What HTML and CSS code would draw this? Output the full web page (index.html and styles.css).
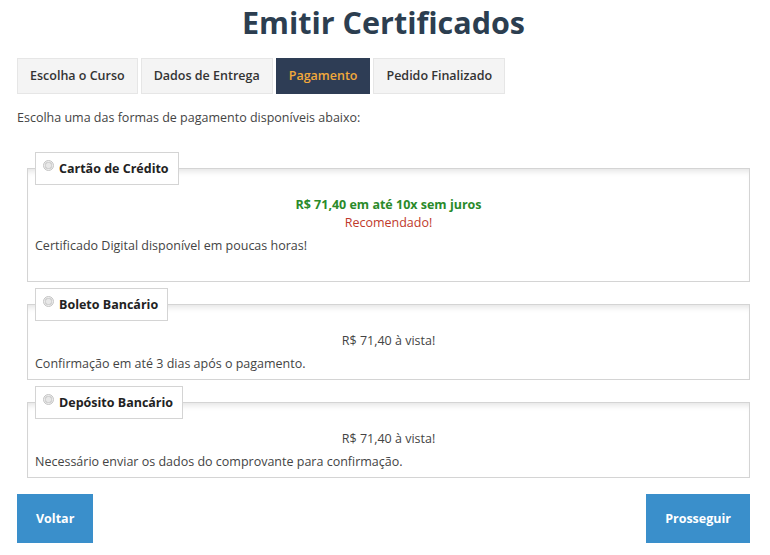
FILE: index.html
```html
<!DOCTYPE html>
<html lang="pt-BR">
<head>
  <meta charset="UTF-8">
  <title>Emitir Certificados</title>
  <link rel="stylesheet" href="styles.css">
</head>
<body>
  <h1>Emitir Certificados</h1>

  <ul class="etapas">
    <li>Escolha o Curso</li>
    <li>Dados de Entrega</li>
    <li class="ativa">Pagamento</li>
    <li>Pedido Finalizado</li>
  </ul>

  <p class="intro">Escolha uma das formas de pagamento disponíveis abaixo:</p>

  <form class="pagamentos">
    <fieldset class="forma">
      <legend><label><input type="radio" name="forma" value="cartao"> Cartão de Crédito</label></legend>
      <p class="preco destaque">R$ 71,40 em até 10x sem juros</p>
      <p class="preco recomendado">Recomendado!</p>
      <p class="obs extra">Certificado Digital disponível em poucas horas!</p>
    </fieldset>

    <fieldset class="forma">
      <legend><label><input type="radio" name="forma" value="boleto"> Boleto Bancário</label></legend>
      <p class="preco">R$ 71,40 à vista!</p>
      <p class="obs">Confirmação em até 3 dias após o pagamento.</p>
    </fieldset>

    <fieldset class="forma">
      <legend><label><input type="radio" name="forma" value="deposito"> Depósito Bancário</label></legend>
      <p class="preco">R$ 71,40 à vista!</p>
      <p class="obs">Necessário enviar os dados do comprovante para confirmação.</p>
    </fieldset>

    <div class="botoes">
      <button type="button" class="btn">Voltar</button>
      <button type="button" class="btn">Prosseguir</button>
    </div>
  </form>
</body>
</html>
```

FILE: styles.css
```css
body {
  font-family: "Open Sans", "Liberation Sans", sans-serif;
  font-size: 12.5px;
  color: #444;
  background: #fff;
  margin: 0;
  padding: 2px 20px 0 17px;
}
h1 {
  margin: 0;
  text-align: center;
  font-size: 30.5px;
  line-height: 40px;
  font-weight: 700;
  color: #2c3e50;
}
.etapas {
  list-style: none;
  margin: 16px 0 0;
  padding: 0;
  display: flex;
  gap: 3px;
}
.etapas li {
  background: #f4f4f4;
  border: 1px solid #e6e6e6;
  padding: 0 12px;
  line-height: 34px;
  font-weight: 600;
  color: #333;
}
.etapas li.ativa {
  background: #2e3d55;
  border-color: #2e3d55;
  color: #f2a93b;
}
.intro {
  margin: 15px 0 0;
  line-height: 18px;
}
.pagamentos {
  margin-top: 25px;
}
.forma {
  margin: 0 0 6px 10px;
  padding: 0 7px 6px;
  border: 1px solid #d4d4d4;
  box-shadow: inset 0 6px 6px -4px rgba(0, 0, 0, 0.12);
}
.forma legend {
  padding: 0;
  margin: 0;
}
.forma label {
  display: flex;
  align-items: center;
  gap: 5px;
  border: 1px solid #d4d4d4;
  background: #fff;
  padding: 0 9px 0 7px;
  line-height: 31px;
  font-weight: 700;
  color: #222;
}
.forma input[type="radio"] {
  appearance: none;
  margin: 0;
  width: 11px;
  height: 11px;
  border-radius: 50%;
  border: 1px solid #c4c4c4;
  background: radial-gradient(circle, #e8e8e8 0 35%, #d2d2d2 36% 60%, #ececec 61%);
  position: relative;
  top: -3px;
}
.forma p {
  margin: 0;
  line-height: 18px;
}
.preco {
  text-align: center;
}
.forma .preco:first-of-type {
  margin-top: 11px;
}
.destaque {
  color: #2a8a2a;
  font-weight: 700;
}
.recomendado {
  color: #c0392b;
}
.obs {
  margin-top: 5px !important;
}
.obs.extra {
  margin-bottom: 20px;
}
.botoes {
  display: flex;
  justify-content: space-between;
  margin-top: 16px;
}
.btn {
  font-family: inherit;
  font-size: 12.5px;
  font-weight: 700;
  color: #fff;
  background: #3a8fcb;
  border: 0;
  border-radius: 0;
  padding: 0 19px;
  height: 49px;
}
```
